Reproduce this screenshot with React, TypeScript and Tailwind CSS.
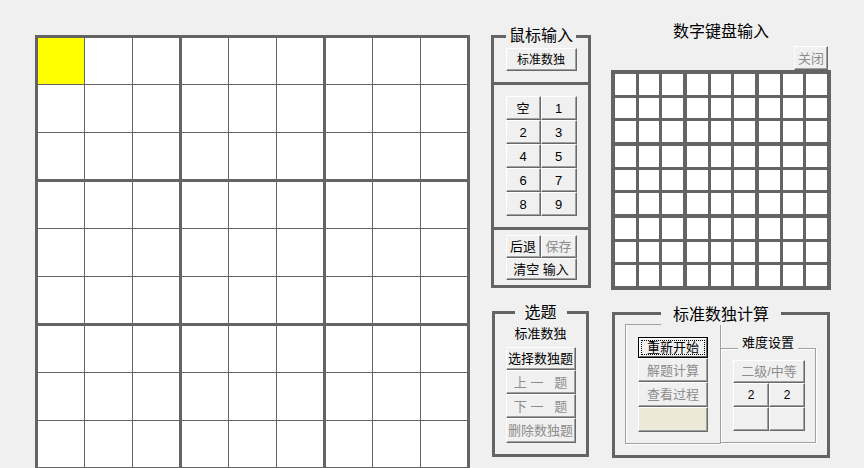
import type { ReactNode } from 'react';

interface BtnProps {
  children?: ReactNode;
  disabled?: boolean;
  className?: string;
}

// classic 3D push button
function Btn({ children, disabled, className = '' }: BtnProps) {
  return (
    <div
      className={`flex items-center justify-center whitespace-pre border border-t-white border-l-white border-r-[#696969] border-b-[#696969] shadow-[inset_-1px_-1px_0_#a0a0a0] text-[12px] leading-none ${
        disabled ? 'text-[#8d8d8d]' : 'text-black'
      } ${className}`}
    >
      {children}
    </div>
  );
}

function MainGrid() {
  return (
    <div className="grid w-fit grid-cols-[repeat(3,auto)] gap-[3px] bg-[#646464] p-[3px]">
      {Array.from({ length: 9 }).map((_, b) => (
        <div key={b} className="grid grid-cols-[46px_47px_46px] grid-rows-[46px_47px_46px] gap-px">
          {Array.from({ length: 9 }).map((_, c) => (
            <div key={c} className={b === 0 && c === 0 ? 'bg-[#ffff00]' : 'bg-white'}></div>
          ))}
        </div>
      ))}
    </div>
  );
}

function KeypadGrid() {
  return (
    <div className="grid w-fit grid-cols-[repeat(3,auto)] gap-[4px] bg-[#646464] p-[4px]">
      {Array.from({ length: 9 }).map((_, b) => (
        <div key={b} className="grid grid-cols-[21px_20px_21px] grid-rows-[21px_20px_21px] gap-[3px]">
          {Array.from({ length: 9 }).map((_, c) => (
            <div key={c} className="bg-white"></div>
          ))}
        </div>
      ))}
    </div>
  );
}

const numberRows = [
  ['空', '1'],
  ['2', '3'],
  ['4', '5'],
  ['6', '7'],
  ['8', '9'],
];

export default function App() {
  return (
    <div className="flex h-[468px] w-[864px] overflow-hidden bg-[#f0f0f0] font-['Liberation_Sans','Noto_Sans_CJK_SC',sans-serif] text-black">
      {/* 数独主盘 */}
      <div className="ml-[35px] mt-[35px]">
        <MainGrid />
      </div>

      {/* 中间列 */}
      <div className="ml-[21px] flex w-[100px] flex-col">
        <div className="relative mt-[35px] flex h-[253px] flex-col border-[3px] border-[#646464]">
          <span className="absolute -top-[12px] left-1/2 -translate-x-1/2 whitespace-nowrap bg-[#f0f0f0] px-[3px] text-[16px] leading-[20px]">
            鼠标输入
          </span>
          <div className="flex h-[44px] items-start justify-center pt-[10px]">
            <Btn className="h-[23px] w-[71px]">标准数独</Btn>
          </div>
          <div className="h-[3px] bg-[#646464]"></div>
          <div className="flex h-[142px] flex-col items-center pt-[11px]">
            {numberRows.map((row) => (
              <div key={row[0]} className="flex">
                <Btn className="h-[24px] w-[35px] text-[13px]">{row[0]}</Btn>
                <Btn className="h-[24px] w-[36px] text-[13px]">{row[1]}</Btn>
              </div>
            ))}
          </div>
          <div className="h-[3px] bg-[#646464]"></div>
          <div className="flex flex-col items-center pt-[5px]">
            <div className="flex">
              <Btn className="h-[23px] w-[35px] text-[13px]">后退</Btn>
              <Btn disabled className="h-[23px] w-[36px] text-[13px]">保存</Btn>
            </div>
            <Btn className="h-[22px] w-[71px] text-[13px]">清空 输入</Btn>
          </div>
        </div>

        <div className="relative ml-[1px] mt-[23px] flex h-[146px] w-[97px] flex-col items-center border-[3px] border-[#646464]">
          <span className="absolute -top-[11px] left-1/2 -translate-x-1/2 whitespace-nowrap bg-[#f0f0f0] px-[10px] text-[16px] leading-[20px]">
            选题
          </span>
          <div className="mt-[12px] h-[21px] text-[13px] leading-[16px]">标准数独</div>
          <Btn className="h-[23px] w-[70px] text-[13px]">选择数独题</Btn>
          <Btn disabled className="h-[24px] w-[70px] text-[13px]">{'上 一   题'}</Btn>
          <Btn disabled className="h-[24px] w-[70px] text-[13px]">{'下 一   题'}</Btn>
          <Btn disabled className="h-[25px] w-[70px] text-[13px]">删除数独题</Btn>
        </div>
      </div>

      {/* 右侧列 */}
      <div className="ml-[20px] flex w-[220px] flex-col">
        <div className="mt-[22px] h-[20px] text-center text-[16px] leading-[20px]">数字键盘输入</div>
        <div className="mt-[4px] flex justify-end pr-[3px]">
          <Btn disabled className="h-[24px] w-[34px] text-[13px]">关闭</Btn>
        </div>
        <KeypadGrid />

        <div className="relative ml-[1px] mt-[22px] h-[146px] w-[218px] border-[3px] border-[#646464]">
          <span className="absolute -top-[10px] left-1/2 -translate-x-1/2 whitespace-nowrap bg-[#f0f0f0] px-[12px] text-[16px] leading-[20px]">
            标准数独计算
          </span>
          <div className="flex pl-[10px] pt-[9px]">
            {/* 操作区 */}
            <div className="flex h-[120px] w-[96px] flex-col border-b border-l border-r border-[#a0a0a0] shadow-[1px_1px_0_white,inset_1px_0_0_white]">
              <div className="h-px w-[38px] bg-[#a0a0a0]"></div>
              <div className="ml-[12px] mt-[12px] flex flex-col">
                <div className="h-[21px] w-[70px] border border-black">
                  <div className="flex h-full w-full items-center justify-center border border-t-white border-l-white border-r-[#696969] border-b-[#696969] p-[1px]">
                    <div className="flex h-full w-full items-center justify-center border border-dotted border-black text-[13px] leading-none">
                      重新开始
                    </div>
                  </div>
                </div>
                <Btn disabled className="h-[24px] w-[70px] text-[13px]">解题计算</Btn>
                <Btn disabled className="h-[25px] w-[70px] text-[13px]">查看过程</Btn>
                <Btn className="h-[25px] w-[70px] bg-[#ece9d8]"></Btn>
              </div>
            </div>

            {/* 难度设置 */}
            <div className="relative mt-[24px] h-[95px] w-[95px] border-b border-r border-t border-[#a0a0a0] shadow-[1px_1px_0_white,inset_0_1px_0_white]">
              <span className="absolute -top-[14px] left-1/2 -translate-x-1/2 whitespace-nowrap bg-[#f0f0f0] px-[4px] text-[13px] leading-[16px]">
                难度设置
              </span>
              <div className="ml-[12px] mt-[11px] flex flex-col">
                <Btn disabled className="h-[23px] w-[72px] text-[13px]">二级/中等</Btn>
                <div className="flex">
                  <Btn className="h-[24px] w-[36px]">2</Btn>
                  <Btn className="h-[24px] w-[36px]">2</Btn>
                </div>
                <div className="flex">
                  <Btn className="h-[24px] w-[36px]"></Btn>
                  <Btn className="h-[24px] w-[36px]"></Btn>
                </div>
              </div>
            </div>
          </div>
        </div>
      </div>
    </div>
  );
}
